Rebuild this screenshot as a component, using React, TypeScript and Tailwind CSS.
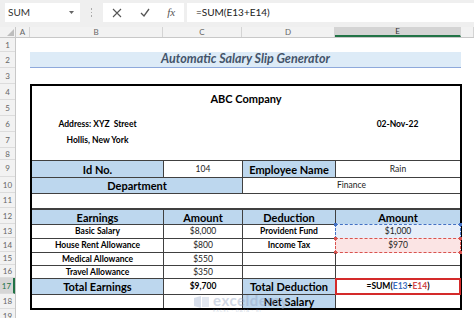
import { ReactNode } from "react";

const ROWS = [
  { n: 1, h: "h-[14px]" },
  { n: 2, h: "h-[16px]" },
  { n: 3, h: "h-[16px]" },
  { n: 4, h: "h-[16px]" },
  { n: 5, h: "h-[16px]" },
  { n: 6, h: "h-[16px]" },
  { n: 7, h: "h-[16px]" },
  { n: 8, h: "h-[12px]" },
  { n: 9, h: "h-[17px]" },
  { n: 10, h: "h-[16px]" },
  { n: 11, h: "h-[15px]" },
  { n: 12, h: "h-[16px]" },
  { n: 13, h: "h-[14px]" },
  { n: 14, h: "h-[14px]" },
  { n: 15, h: "h-[13px]" },
  { n: 16, h: "h-[13px]" },
  { n: 17, h: "h-[16px]" },
  { n: 18, h: "h-[15px]" },
  { n: 19, h: "h-[15px]" },
];

const COLS = [
  { l: "A", w: "w-[14px]" },
  { l: "B", w: "w-[133px]" },
  { l: "C", w: "w-[79px]" },
  { l: "D", w: "w-[93px]" },
  { l: "E", w: "w-[126px]", selected: true },
  { l: "", w: "flex-1" },
];

function FormulaBar() {
  return (
    <div className="flex h-[27px] items-start bg-[#efefef] pt-[3px]">
      <div className="ml-[5px] flex h-[19px] w-[75px] items-center justify-between bg-white pl-[3px] pr-[6px] text-[10px] text-[#333]">
        <span>SUM</span>
        <svg width="5" height="3" viewBox="0 0 5 3">
          <path d="M0 0h5L2.5 3z" fill="#666" />
        </svg>
      </div>
      <div className="flex h-[19px] w-[23px] flex-col items-center justify-center gap-[2px]">
        <span className="h-[1.5px] w-[1.5px] bg-[#aaa]" />
        <span className="h-[1.5px] w-[1.5px] bg-[#aaa]" />
        <span className="h-[1.5px] w-[1.5px] bg-[#aaa]" />
      </div>
      <div className="flex h-[19px] w-[81px] items-center justify-around bg-white text-[#555]">
        <svg width="10" height="10" viewBox="0 0 10 10">
          <path d="M1 1l8 8M9 1l-8 8" stroke="#555" strokeWidth="1.1" />
        </svg>
        <svg width="10" height="9" viewBox="0 0 10 9">
          <path d="M1 5l3 3 5-7" stroke="#555" strokeWidth="1.3" fill="none" />
        </svg>
        <span className="font-['Liberation_Serif',serif] text-[11px] italic leading-none">fx</span>
      </div>
      <div className="ml-[3px] flex h-[19px] flex-1 items-center bg-white pl-[9px] text-[10px] text-[#222]">
        =SUM(E13+E14)
      </div>
    </div>
  );
}

function RowHeaders() {
  return (
    <div className="w-[16px] shrink-0 border-r border-[#c8c8c8] bg-[#f2f2f2]">
      <div className="relative h-[11px] border-b border-[#c8c8c8]">
        <svg className="absolute bottom-[1px] right-[1px]" width="7" height="7" viewBox="0 0 7 7">
          <path d="M7 0v7H0z" fill="#bdbdbd" />
        </svg>
      </div>
      {ROWS.map((r) => (
        <div
          key={r.n}
          className={`flex items-center justify-center border-b border-[#dcdcdc] text-[8px] leading-none ${r.h} ${
            r.n === 17 ? "border-r-2 border-r-[#217346] bg-[#d6d6d6] text-[#217346]" : "text-[#666]"
          }`}
        >
          {r.n}
        </div>
      ))}
    </div>
  );
}

function ColHeaders() {
  return (
    <div className="flex h-[11px] border-b border-[#c8c8c8] bg-[#f2f2f2]">
      {COLS.map((c, i) => (
        <div
          key={i}
          className={`flex items-center justify-center border-r border-[#d4d4d4] text-[8px] leading-none ${c.w} ${
            c.selected ? "border-b-2 border-b-[#217346] bg-[#d4d4d4] text-[#333]" : "text-[#666]"
          }`}
        >
          {c.l}
        </div>
      ))}
    </div>
  );
}

function C({
  children,
  blue,
  big,
  bold,
  first,
  span,
  className = "",
}: {
  children?: ReactNode;
  blue?: boolean;
  big?: boolean;
  bold?: boolean;
  first?: boolean;
  span?: boolean;
  className?: string;
}) {
  return (
    <div
      className={`relative flex items-center justify-center whitespace-nowrap leading-none ${first ? "" : "border-l border-[#404040]"} ${
        blue ? "bg-[#bdd7ee]" : ""
      } ${big ? "text-[11px] font-bold" : bold ? "text-[8.5px] font-bold" : "text-[8.5px] text-[#222]"} ${
        span ? "col-span-2" : ""
      } ${className}`}
    >
      {children}
    </div>
  );
}

function Row({ h, children, thick }: { h: string; children?: ReactNode; thick?: boolean }) {
  return (
    <div
      className={`grid grid-cols-[131px_79px_93px_125px] ${h} ${
        thick ? "border-t-2" : "border-t"
      } border-[#404040]`}
    >
      {children}
    </div>
  );
}

function Marquee({ color, fill }: { color: string; fill: string }) {
  return (
    <span className={`absolute inset-[-1px] border border-dashed ${color} ${fill}`}>
      <span className="absolute -left-[2px] -top-[2px] h-[3px] w-[3px] bg-current" />
      <span className="absolute -right-[2px] -top-[2px] h-[3px] w-[3px] bg-current" />
      <span className="absolute -bottom-[2px] -left-[2px] h-[3px] w-[3px] bg-current" />
      <span className="absolute -bottom-[2px] -right-[2px] h-[3px] w-[3px] bg-current" />
    </span>
  );
}

function SlipBox() {
  return (
    <div className="ml-[14px] h-[226px] w-[432px] border-2 border-black">
      <div className="h-[74px]">
        <div className="flex h-[30px] items-center justify-center pb-[4px] text-[11px] font-bold">ABC Company</div>
        <div className="grid h-[16px] grid-cols-[131px_79px_93px_125px] text-[8.5px] font-bold leading-none">
          <div className="flex items-center justify-center whitespace-pre">Address: XYZ  Street</div>
          <div />
          <div />
          <div className="flex items-center justify-center">02-Nov-22</div>
        </div>
        <div className="grid h-[16px] grid-cols-[131px_79px_93px_125px] text-[8.5px] font-bold leading-none">
          <div className="flex items-center justify-center">Hollis, New York</div>
        </div>
      </div>

      <Row h="h-[17px]">
        <C first blue big>Id No.</C>
        <C>104</C>
        <C blue big>Employee Name</C>
        <C>Rain</C>
      </Row>
      <Row h="h-[16px]">
        <C first blue big span>Department</C>
        <C span>Finance</C>
      </Row>
      <div className="h-[15px] border-t border-[#404040]" />
      <Row h="h-[16px]" thick>
        <C first blue big>Earnings</C>
        <C blue big>Amount</C>
        <C blue big>Deduction</C>
        <C blue big>Amount</C>
      </Row>
      <Row h="h-[14px]">
        <C first bold>Basic Salary</C>
        <C>$8,000</C>
        <C bold>Provident Fund</C>
        <C>
          <Marquee color="border-[#4472c4] text-[#4472c4]" fill="bg-[#e6eef9]" />
          <span className="relative text-[#222]">$1,000</span>
        </C>
      </Row>
      <Row h="h-[14px]">
        <C first bold>House Rent Allowance</C>
        <C>$800</C>
        <C bold>Income Tax</C>
        <C>
          <Marquee color="border-[#d9534f] text-[#d9534f]" fill="bg-[#fbe4e4]" />
          <span className="relative text-[#222]">$970</span>
        </C>
      </Row>
      <Row h="h-[13px]">
        <C first bold>Medical Allowance</C>
        <C>$550</C>
        <C />
        <C />
      </Row>
      <Row h="h-[13px]">
        <C first bold>Travel Allowance</C>
        <C>$350</C>
        <C />
        <C />
      </Row>
      <Row h="h-[16px]">
        <C first blue big>Total Earnings</C>
        <C bold>$9,700</C>
        <C blue big>Total Deduction</C>
        <C bold>
          <span className="absolute inset-[-1px] border-2 border-[#d42a2a]" />
          <span>
            =SUM(<span className="text-[#3f6fc0]">E13</span>+<span className="text-[#d04a4a]">E14</span>)
          </span>
        </C>
      </Row>
      <Row h="h-[14px]">
        <C first />
        <C />
        <C blue big>Net Salary</C>
        <C />
      </Row>
    </div>
  );
}

function Sheet() {
  return (
    <div>
      <div className="h-[14px]" />
      <div className="flex h-[16px]">
        <div className="w-[14px]" />
        <div className="flex w-[431px] items-center justify-center border-b border-[#8ea9db] bg-[#ddebf7] text-[12.5px] font-bold italic leading-none text-[#44546a]">
          Automatic Salary Slip Generator
        </div>
      </div>
      <div className="h-[16px]" />
      <SlipBox />
    </div>
  );
}

function Watermark() {
  return (
    <div className="pointer-events-none absolute left-[193px] top-[293px] flex items-start gap-[3px] opacity-40">
      <svg width="17" height="14" viewBox="0 0 17 14" className="mt-[2px]">
        <path d="M1 3l7-2v12l-7-2z" fill="#9fb0cf" />
        <path d="M9 2h7v10H9z" fill="#b8c5dc" />
      </svg>
      <div className="flex flex-col leading-none">
        <span className="text-[15px] font-bold tracking-[0.5px] text-[#8e9fc0]">exceldemy</span>
        <span className="mt-[1px] text-[4px] tracking-[1px] text-[#8e9fc0]">EXCEL · DATA · BI</span>
      </div>
    </div>
  );
}

export default function App() {
  return (
    <div className="relative h-[318px] w-[474px] overflow-hidden bg-white font-['Lato','Open_Sans',sans-serif] text-black">
      <FormulaBar />
      <div className="flex">
        <RowHeaders />
        <div className="flex-1">
          <ColHeaders />
          <Sheet />
        </div>
      </div>
      <Watermark />
    </div>
  );
}
